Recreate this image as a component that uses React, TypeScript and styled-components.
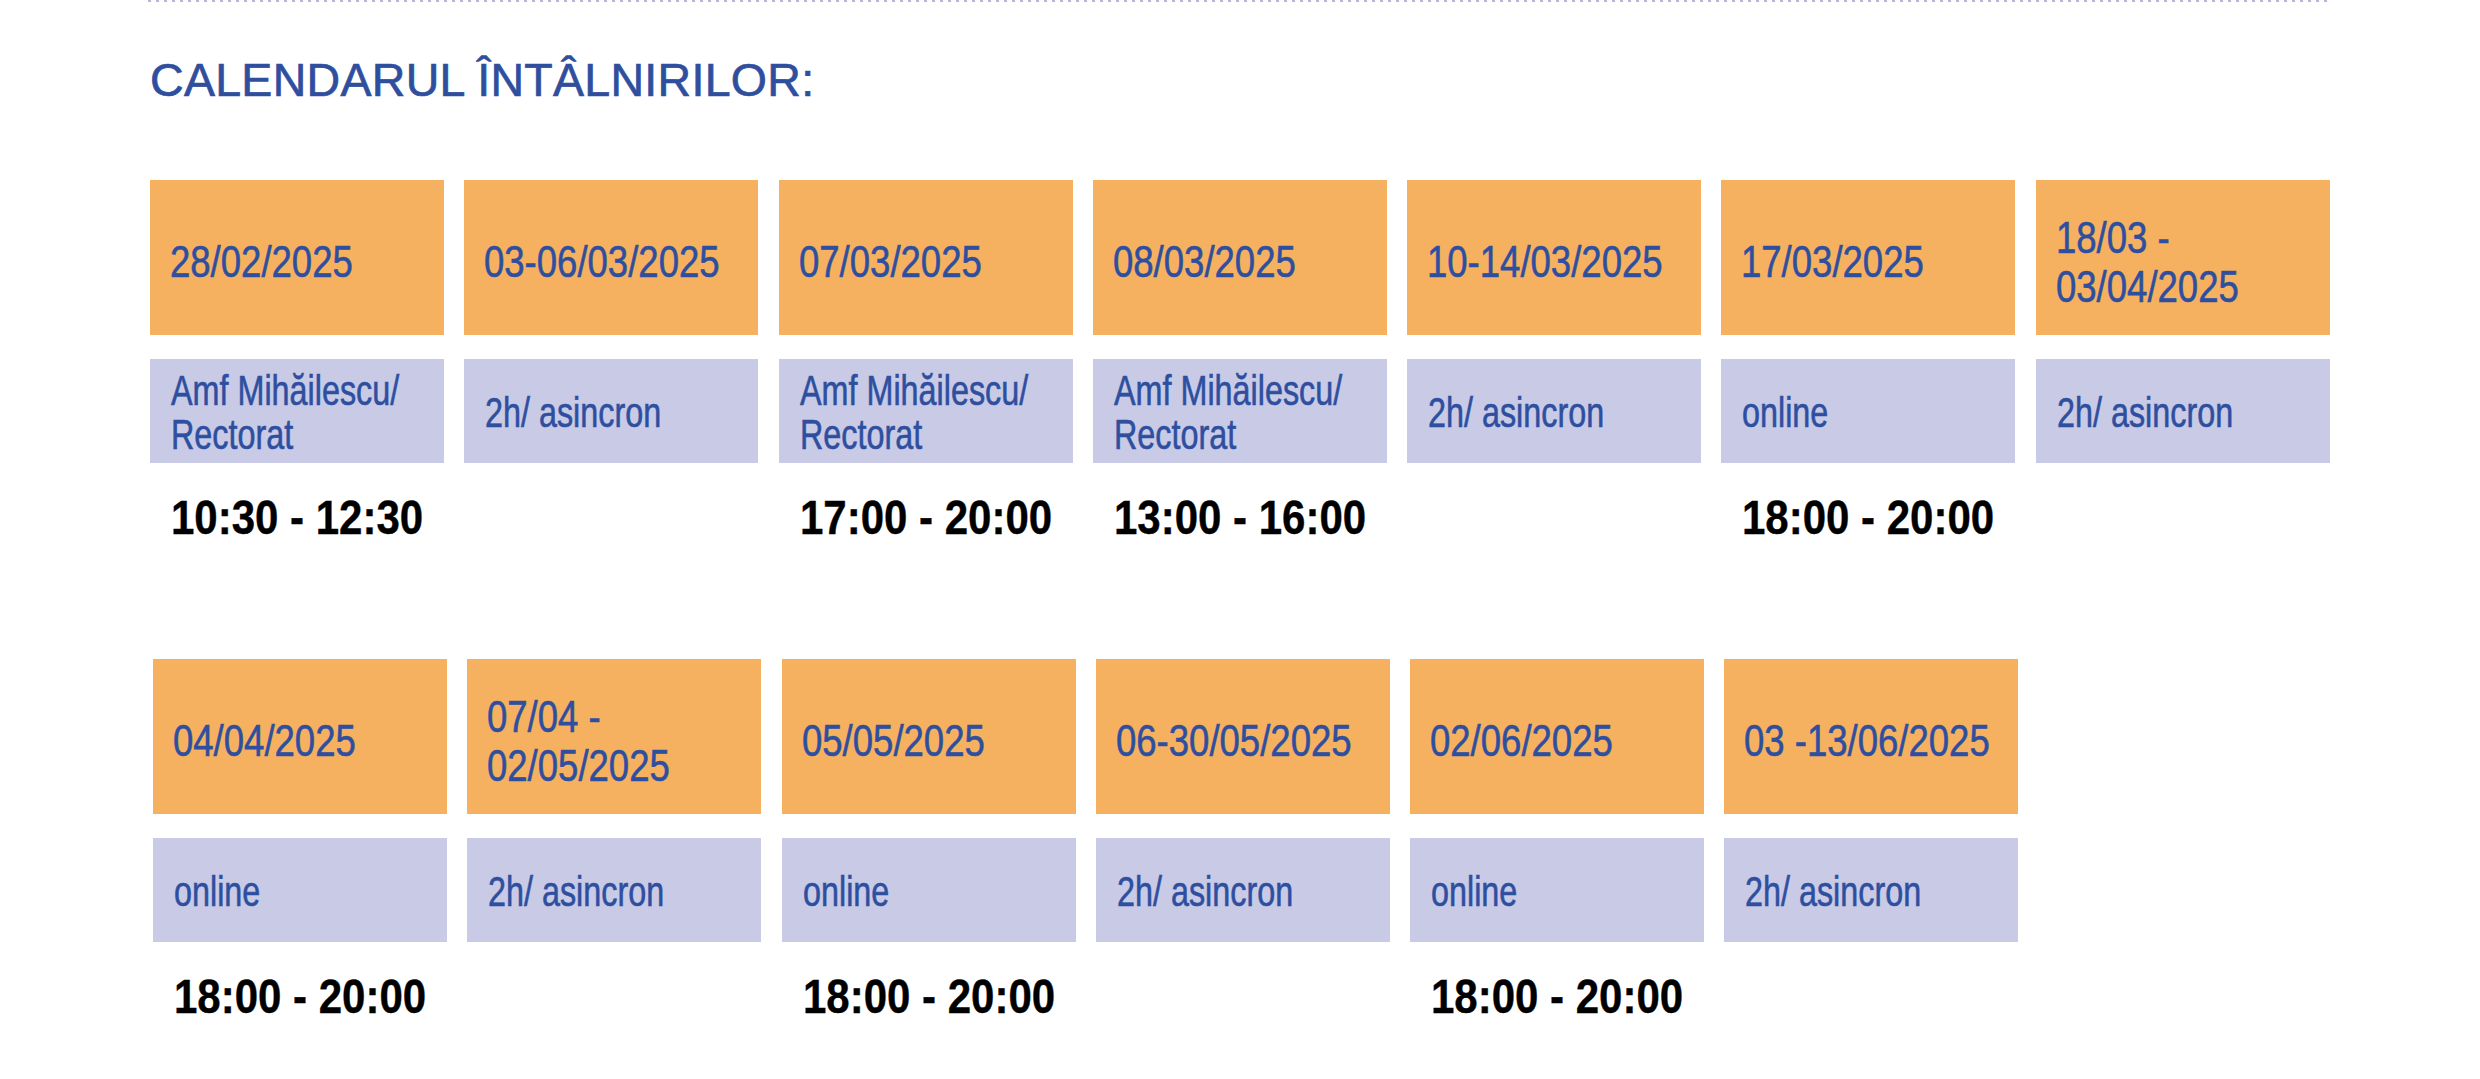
import React from "react";
import styled, { createGlobalStyle } from "styled-components";

const GlobalStyle = createGlobalStyle`
  html, body {
    margin: 0;
    padding: 0;
    background: #ffffff;
  }
  body {
    font-family: "Liberation Sans", Arial, sans-serif;
  }
`;

const Page = styled.div`
  width: 2480px;
  min-height: 1079px;
  box-sizing: border-box;
  padding: 0 0 0 150px;
  background: #ffffff;
`;

const DottedRule = styled.div`
  margin-left: -2px;
  width: 2184px;
  height: 2px;
  background-image: linear-gradient(to right, #b7b9da 0, #b7b9da 3px, transparent 3px);
  background-size: 8px 2px;
  background-repeat: repeat-x;
`;

const Title = styled.h1`
  margin: 52px 0 0 0;
  font-family: "Liberation Sans", Arial, sans-serif;
  font-weight: 400;
  font-size: 46.5px;
  line-height: 52px;
  letter-spacing: 0.3px;
  color: #2f4f9e;
  -webkit-text-stroke: 0.7px #2f4f9e;
`;

const Rows = styled.div`
  display: flex;
  flex-direction: column;
  gap: 114px;
  margin-top: 74px;
`;

const Row = styled.div<{ $shift: number }>`
  display: grid;
  grid-template-columns: repeat(7, 294px);
  column-gap: 20.3px;
  margin-left: ${(p) => p.$shift}px;
`;

const Column = styled.div`
  display: flex;
  flex-direction: column;
`;

/* condensed face: the original uses a Helvetica Condensed cut */
const Condensed = styled.span<{ $squeeze: number }>`
  display: inline-block;
  white-space: pre;
  transform: scaleX(${(p) => p.$squeeze});
  transform-origin: left center;
`;

const DateBox = styled.div`
  height: 155px;
  box-sizing: border-box;
  padding: 8px 20px 0 20px;
  background: #f6b160;
  display: flex;
  align-items: center;
  overflow: hidden;
  font-family: "Liberation Sans", Arial, sans-serif;
  font-size: 44px;
  line-height: 49px;
  color: #2e4f9f;
  -webkit-text-stroke: 0.6px #2e4f9f;
`;

const PlaceBox = styled.div`
  height: 104px;
  margin-top: 24px;
  box-sizing: border-box;
  padding: 3px 20px 0 21px;
  background: #c8cae6;
  display: flex;
  align-items: center;
  overflow: hidden;
  font-family: "Liberation Sans", Arial, sans-serif;
  font-size: 42px;
  line-height: 44px;
  color: #2e4f9f;
  -webkit-text-stroke: 0.6px #2e4f9f;
`;

const Time = styled.div`
  height: 54px;
  margin-top: 28px;
  padding-left: 21px;
  font-family: "Liberation Sans", Arial, sans-serif;
  font-weight: 700;
  font-size: 48px;
  line-height: 54px;
  color: #000000;
  -webkit-text-stroke: 0.4px #000000;
  white-space: nowrap;
`;

type Meeting = { date: string; place: string; time?: string };

const rowOne: Meeting[] = [
  { date: "28/02/2025", place: "Amf Mihăilescu/\nRectorat", time: "10:30 - 12:30" },
  { date: "03-06/03/2025", place: "2h/ asincron" },
  { date: "07/03/2025", place: "Amf Mihăilescu/\nRectorat", time: "17:00 - 20:00" },
  { date: "08/03/2025", place: "Amf Mihăilescu/\nRectorat", time: "13:00 - 16:00" },
  { date: "10-14/03/2025", place: "2h/ asincron" },
  { date: "17/03/2025", place: "online", time: "18:00 - 20:00" },
  { date: "18/03 -\n03/04/2025", place: "2h/ asincron" },
];

const rowTwo: Meeting[] = [
  { date: "04/04/2025", place: "online", time: "18:00 - 20:00" },
  { date: "07/04 -\n02/05/2025", place: "2h/ asincron" },
  { date: "05/05/2025", place: "online", time: "18:00 - 20:00" },
  { date: "06-30/05/2025", place: "2h/ asincron" },
  { date: "02/06/2025", place: "online", time: "18:00 - 20:00" },
  { date: "03 -13/06/2025", place: "2h/ asincron" },
];

const MeetingColumn: React.FC<{ m: Meeting }> = ({ m }) => (
  <Column>
    <DateBox>
      <Condensed $squeeze={0.83}>{m.date}</Condensed>
    </DateBox>
    <PlaceBox>
      <Condensed $squeeze={0.77}>{m.place}</Condensed>
    </PlaceBox>
    <Time>{m.time ? <Condensed $squeeze={0.875}>{m.time}</Condensed> : null}</Time>
  </Column>
);

export default function App() {
  return (
    <>
      <GlobalStyle />
      <Page>
        <DottedRule />
        <Title>CALENDARUL ÎNTÂLNIRILOR:</Title>
        <Rows>
          <Row $shift={0}>
            {rowOne.map((m, i) => (
              <MeetingColumn key={i} m={m} />
            ))}
          </Row>
          <Row $shift={3}>
            {rowTwo.map((m, i) => (
              <MeetingColumn key={i} m={m} />
            ))}
          </Row>
        </Rows>
      </Page>
    </>
  );
}
